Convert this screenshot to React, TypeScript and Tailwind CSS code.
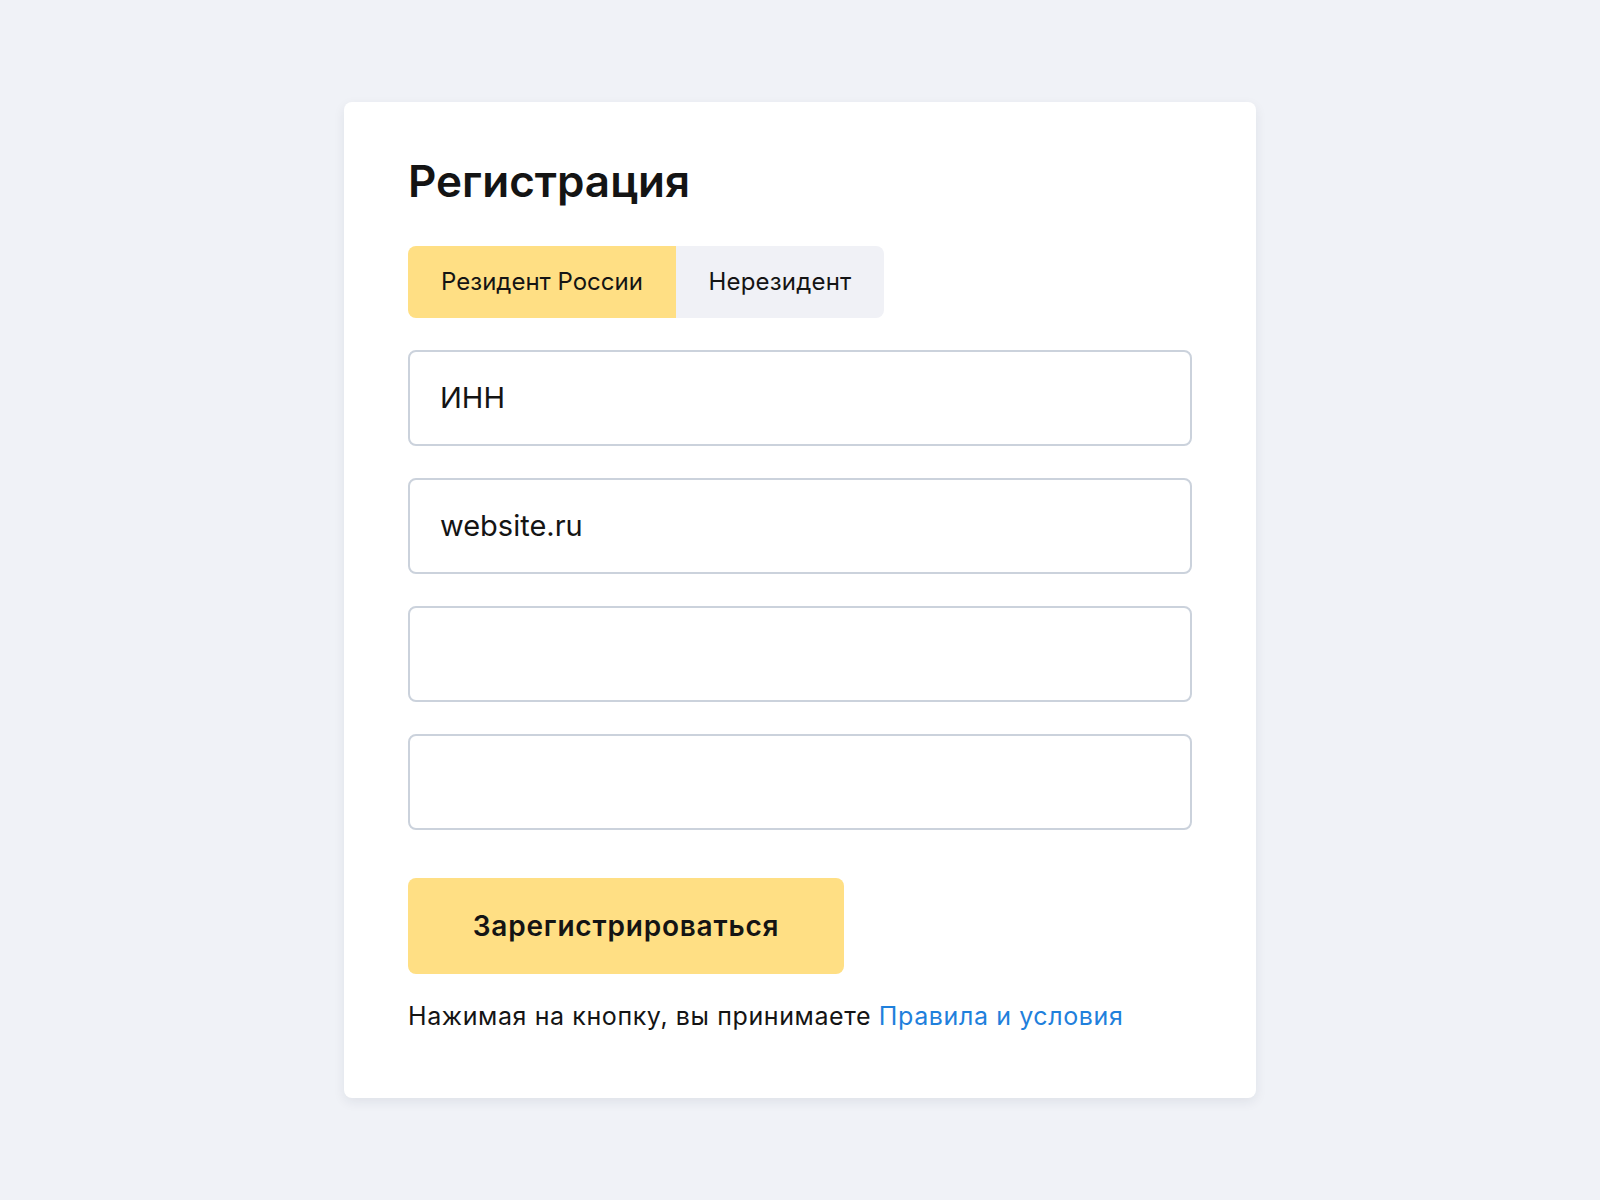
import React from "react";

export default function App() {
  return (
    <div
      className="w-[1600px] h-[1200px] bg-[#f0f2f7] flex items-center justify-center"
      style={{ fontFamily: "Inter, 'Noto Sans', sans-serif" }}
    >
      <div className="w-[912px] bg-white rounded-lg shadow-[0_4px_12px_rgba(30,40,70,0.08)] px-16 pt-[53px] pb-16 flex flex-col">
        <h1 className="text-[44px] leading-[52px] font-semibold text-[#141414]">Регистрация</h1>
        <div className="mt-[39px] flex">
          <button className="h-[72px] w-[268px] flex items-center justify-center rounded-l-lg bg-[#ffdf84] text-[24px] text-[#141414]">
            Резидент России
          </button>
          <button className="h-[72px] w-[208px] flex items-center justify-center rounded-r-lg bg-[#f0f1f6] text-[24px] tracking-[0.2px] text-[#141414]">
            Нерезидент
          </button>
        </div>
        <div className="mt-8 flex flex-col gap-8">
          <div className="h-[96px] rounded-lg border-2 border-[#cbd2dc] flex items-center pl-[30px] pr-8 text-[29px] text-[#141414]">
            ИНН
          </div>
          <div className="h-[96px] rounded-lg border-2 border-[#cbd2dc] flex items-center pl-[30px] pr-8 text-[29px] text-[#141414]">
            website.ru
          </div>
          <div className="h-[96px] rounded-lg border-2 border-[#cbd2dc]" />
          <div className="h-[96px] rounded-lg border-2 border-[#cbd2dc]" />
        </div>
        <button className="mt-12 w-[436px] h-[96px] rounded-lg bg-[#ffdf84] text-[28px] tracking-[0.8px] font-semibold text-[#141414]">
          Зарегистрироваться
        </button>
        <p className="mt-6 text-[25px] leading-[36px] tracking-[0.6px] text-[#141414]">
          Нажимая на кнопку, вы принимаете <a className="text-[#1f80dc]">Правила и условия</a>
        </p>
      </div>
    </div>
  );
}
